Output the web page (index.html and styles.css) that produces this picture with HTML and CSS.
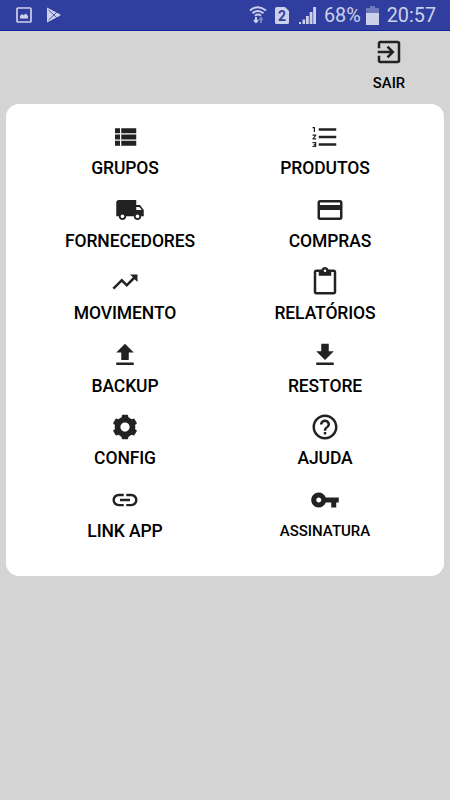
FILE: index.html
```
<!DOCTYPE html>
<html lang="pt-BR">
<head>
    <meta charset="UTF-8">
    <meta name="viewport" content="width=device-width, initial-scale=1.0">
    <title>Menu</title>
    <link rel="stylesheet" href="styles.css">
</head>
<body>

    <!-- Barra de status -->
    <header class="status-bar">
        <svg class="status-image" width="16" height="16" viewBox="0 0 16 16">
            <rect x="1" y="1" width="14" height="14" rx="1" fill="none" stroke="currentColor" stroke-width="1.7"/>
            <path d="M4 11.5V9l2-2 1.5 1.2L10 6.5l2 2.500v2.500z" fill="currentColor"/>
        </svg>
        <svg class="status-play" width="16" height="16" viewBox="0 0 16 16">
            <path d="M1 .5L12.500 6.500 15 8l-2.500 1.500L1 15.500z" fill="currentColor"/>
            <path d="M2.500 3L8 8l-5.500 5M8 8l3-3M8 8l3 3" fill="none" stroke="#303f9f" stroke-width=".8"/>
        </svg>
        <svg class="status-wifi" width="18" height="18" viewBox="0 0 18 18">
            <g fill="none" stroke="currentColor" stroke-width="1.900">
                <path d="M1 4.500Q9-2.200 17 4.500M3.500 7.300Q9 2.600 14.500 7.300M6 9.800Q9 7.400 12 9.800"/>
                <path d="M7 11v5M5 14l2 2.200L9 14"/>
                <path d="M12 17v-5M10.300 14l1.700-2 1.700 2" opacity=".5"/>
            </g>
        </svg>
        <svg class="status-sim" width="14" height="17" viewBox="0 0 14 17">
            <path d="M2 0h8l4 4v11.500a1.500 1.500 0 0 1-1.500 1.500h-11A1.500 1.500 0 0 1 0 15.500V2a2 2 0 0 1 2-2z" fill="currentColor"/>
            <text x="7" y="13.500" text-anchor="middle" class="sim-number">2</text>
        </svg>
        <svg class="status-signal" width="17" height="17" viewBox="0 0 17 17">
            <path d="M0 15h2v2H0zM3.500 12.500h2.600V17H3.500zM7 9h2.800v8H7zM10.700 5h2.800v12h-2.800zM14.200 0H17v17h-2.800z" fill="currentColor"/>
        </svg>
        <span class="status-battery-text">68%</span>
        <svg class="status-battery" width="13" height="19" viewBox="0 0 13 19">
            <path d="M4 0h5v2h4v5H0V2h4z" fill="currentColor" opacity=".4"/>
            <path d="M0 7h13v12H0z" fill="currentColor"/>
        </svg>
        <span class="status-clock">20:57</span>
    </header>

    <div class="top-bar">
        <div class="exit">
            <svg class="icon" viewBox="0 0 24 24"><path d="M10.090 15.590L11.500 17l5-5-5-5-1.410 1.410L12.670 11H3v2h9.670l-2.580 2.590zM19 3H5c-1.110 0-2 .9-2 2v4h2V5h14v14H5v-4H3v4c0 1.100.890 2 2 2h14c1.100 0 2-.9 2-2V5c0-1.100-.9-2-2-2z"/></svg>
            <span class="exit-label">SAIR</span>
        </div>
    </div>

    <!-- Menu principal -->
    <main class="menu">
        <div class="menu-item">
            <svg class="icon" viewBox="0 0 24 24"><path d="M4 14h4v-4H4v4zm0 5h4v-4H4v4zM4 9h4V5H4v4zm5 5h12v-4H9v4zm0 5h12v-4H9v4zM9 5v4h12V5H9z"/></svg>
            <span class="label">GRUPOS</span>
        </div>
        <div class="menu-item">
            <svg class="icon" viewBox="0 0 24 24"><path d="M2 17h2v.5H3v1h1v.5H2v1h3v-4H2v1zm1-9h1V4H2v1h1v3zm-1 3h1.800L2 13.100v.9h3v-1H3.200L5 10.900V10H2v1zm5-6v2h14V5H7zm0 14h14v-2H7v2zm0-6h14v-2H7v2z"/></svg>
            <span class="label">PRODUTOS</span>
        </div>
        <div class="menu-item shifted">
            <svg class="icon" viewBox="0 0 24 24"><path d="M20 8h-3V4H3c-1.100 0-2 .9-2 2v11h2c0 1.660 1.340 3 3 3s3-1.340 3-3h6c0 1.660 1.340 3 3 3s3-1.340 3-3h2v-5l-3-4zM6 18.500c-.83 0-1.500-.67-1.500-1.500s.67-1.500 1.500-1.500 1.500.67 1.500 1.500-.67 1.500-1.500 1.500zm13.500-9l1.960 2.500H17V9.500h2.500zm-1.500 9c-.83 0-1.500-.67-1.500-1.500s.67-1.500 1.500-1.500 1.500.67 1.500 1.500-.67 1.500-1.500 1.500z"/></svg>
            <span class="label">FORNECEDORES</span>
        </div>
        <div class="menu-item shifted">
            <svg class="icon" viewBox="0 0 24 24"><path d="M20 4H4c-1.110 0-1.990.890-1.990 2L2 18c0 1.110.890 2 2 2h16c1.110 0 2-.890 2-2V6c0-1.110-.890-2-2-2zm0 14H4v-6h16v6zm0-10H4V6h16v2z"/></svg>
            <span class="label">COMPRAS</span>
        </div>
        <div class="menu-item">
            <svg class="icon" viewBox="0 0 24 24"><path d="M16 6l2.290 2.290-4.880 4.880-4-4L2 16.590 3.410 18l6-6 4 4 6.300-6.290L22 12V6z"/></svg>
            <span class="label">MOVIMENTO</span>
        </div>
        <div class="menu-item">
            <svg class="icon" viewBox="0 0 24 24"><path d="M19 2h-4.180C14.400.84 13.300 0 12 0c-1.300 0-2.400.84-2.820 2H5c-1.100 0-2 .9-2 2v16c0 1.100.9 2 2 2h14c1.100 0 2-.9 2-2V4c0-1.100-.9-2-2-2zm-7 0c.55 0 1 .45 1 1s-.45 1-1 1-1-.45-1-1 .45-1 1-1zm7 18H5V4h2v3h10V4h2v16z"/></svg>
            <span class="label">RELATÓRIOS</span>
        </div>
        <div class="menu-item">
            <svg class="icon" viewBox="0 0 24 24"><path d="M9 16h6v-6h4l-7-7-7 7h4zm-4 2h14v2H5z"/></svg>
            <span class="label">BACKUP</span>
        </div>
        <div class="menu-item">
            <svg class="icon" viewBox="0 0 24 24"><path d="M19 9h-4V3H9v6H5l7 7 7-7zM5 18v2h14v-2H5z"/></svg>
            <span class="label">RESTORE</span>
        </div>
        <div class="menu-item">
            <svg class="icon" viewBox="0 0 24 24">
                <circle cx="12" cy="12" r="6" class="gear-ring"/>
                <rect x="9.400" y="2.200" width="5.200" height="4" rx="1"/>
                <rect x="9.400" y="2.200" width="5.200" height="4" rx="1" transform="rotate(60 12 12)"/>
                <rect x="9.400" y="2.200" width="5.200" height="4" rx="1" transform="rotate(120 12 12)"/>
                <rect x="9.400" y="2.200" width="5.200" height="4" rx="1" transform="rotate(180 12 12)"/>
                <rect x="9.400" y="2.200" width="5.200" height="4" rx="1" transform="rotate(240 12 12)"/>
                <rect x="9.400" y="2.200" width="5.200" height="4" rx="1" transform="rotate(300 12 12)"/>
            </svg>
            <span class="label">CONFIG</span>
        </div>
        <div class="menu-item">
            <svg class="icon" viewBox="0 0 24 24"><path d="M11 18h2v-2h-2v2zm1-16C6.480 2 2 6.480 2 12s4.480 10 10 10 10-4.480 10-10S17.520 2 12 2zm0 18c-4.410 0-8-3.590-8-8s3.590-8 8-8 8 3.590 8 8-3.590 8-8 8zm0-14c-2.210 0-4 1.790-4 4h2c0-1.100.9-2 2-2s2 .9 2 2c0 2-3 1.750-3 5h2c0-2.250 3-2.500 3-5 0-2.210-1.790-4-4-4z"/></svg>
            <span class="label">AJUDA</span>
        </div>
        <div class="menu-item">
            <svg class="icon" viewBox="0 0 24 24"><path d="M3.900 12c0-1.710 1.390-3.100 3.100-3.100h4V7H7c-2.760 0-5 2.240-5 5s2.240 5 5 5h4v-1.900H7c-1.710 0-3.100-1.390-3.100-3.100zM8 13h8v-2H8v2zm9-6h-4v1.900h4c1.710 0 3.100 1.390 3.100 3.100s-1.390 3.100-3.100 3.100h-4V17h4c2.760 0 5-2.240 5-5s-2.240-5-5-5z"/></svg>
            <span class="label">LINK APP</span>
        </div>
        <div class="menu-item">
            <svg class="icon" viewBox="0 0 24 24"><path d="M12.650 10C11.830 7.670 9.610 6 7 6c-3.310 0-6 2.690-6 6s2.690 6 6 6c2.610 0 4.830-1.670 5.650-4H17v4h4v-4h2v-4H12.650zM7 14c-1.100 0-2-.9-2-2s.9-2 2-2 2 .9 2 2-.9 2-2 2z"/></svg>
            <span class="label small">ASSINATURA</span>
        </div>
    </main>

</body>
</html>
```
FILE: styles.css
```
* {
    box-sizing: border-box;
}
body {
    margin: 0;
    min-height: 800px;
    background-color: #d4d4d4;
    font-family: Roboto, sans-serif;
    color: #000;
}
.status-bar {
    display: flex;
    align-items: center;
    height: 31px;
    padding: 0 14px 0 16px;
    background-color: #303f9f;
    border-bottom: 1px solid #0c2799;
    color: #cdd0ea;
    font-size: 19.8px;
}
.status-bar svg {
    flex-shrink: 0;
}
.status-play {
    margin-left: 14px;
}
.status-wifi {
    margin-left: auto;
}
.status-sim {
    margin-left: 8px;
}
.sim-number {
    font-size: 14px;
    font-weight: 700;
    fill: #303f9f;
}
.status-signal {
    margin-left: 10px;
}
.status-battery-text {
    margin-left: 8px;
}
.status-battery {
    margin-left: 5px;
}
.status-clock {
    margin-left: 8px;
}
.top-bar {
    display: flex;
    justify-content: flex-end;
    height: 73px;
    padding: 6px 31px 0 0;
}
.exit {
    display: flex;
    flex-direction: column;
    align-items: center;
    width: 60px;
}
.exit-label {
    margin-top: 6px;
    font-size: 14.8px;
    font-weight: 500;
    line-height: 20px;
}
.icon {
    display: block;
    flex-shrink: 0;
    width: 30px;
    height: 30px;
    fill: #222;
}
.icon .gear-ring {
    fill: none;
    stroke: #222;
    stroke-width: 4.6;
}
.menu {
    display: grid;
    grid-template-columns: 200px 200px;
    grid-auto-rows: 72.5px;
    height: 472px;
    margin: 0 6px;
    padding: 18.4px 0 0 19px;
    background-color: #fff;
    border-radius: 13px;
}
.menu-item {
    display: flex;
    flex-direction: column;
    align-items: center;
}
.shifted {
    padding-left: 10px;
}
.label {
    margin-top: 4px;
    font-size: 17.5px;
    font-weight: 500;
    letter-spacing: -0.1px;
    line-height: 24px;
    white-space: nowrap;
}
.small {
    font-size: 15px;
    letter-spacing: 0;
}
```
